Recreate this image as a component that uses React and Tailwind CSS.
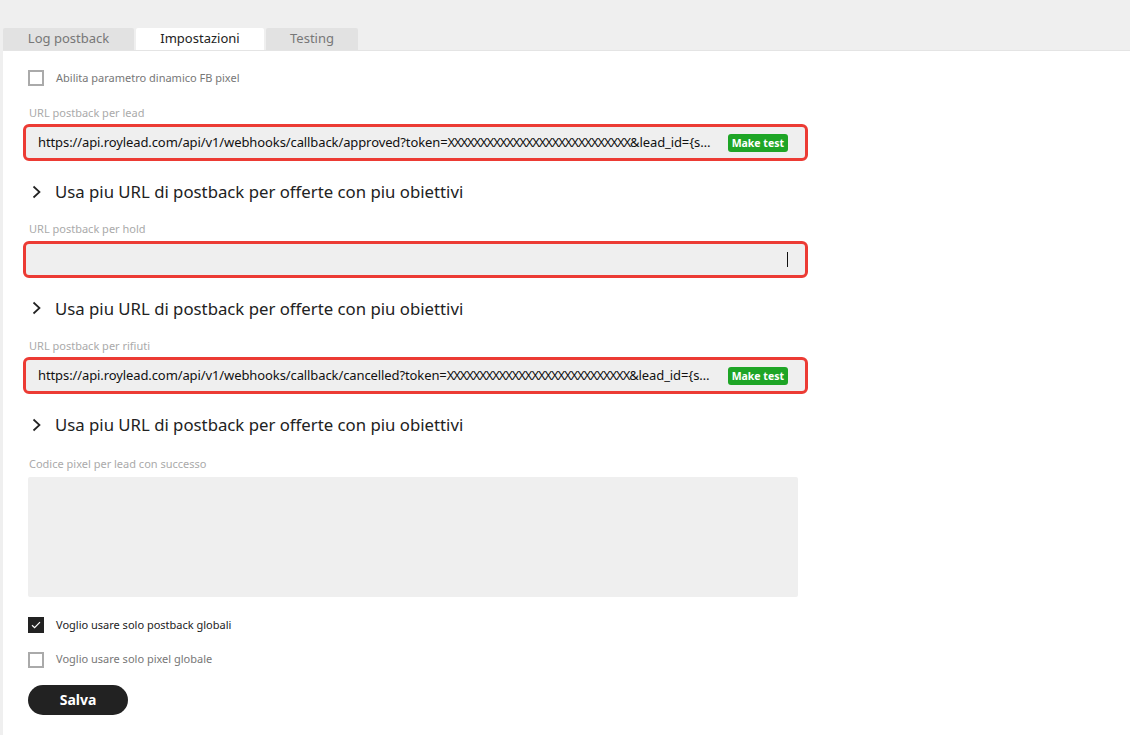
import React, { useState } from "react";

const tabs = ["Log postback", "Impostazioni", "Testing"];

const token = "XXXXXXXXXXXXXXXXXXXXXXXXXXXX";

const fields = [
  {
    label: "URL postback per lead",
    base: "https://api.roylead.com/api/v1/webhooks/callback/approved?token=",
    rest: "&lead_id={sub1}&status=approved",
  },
  { label: "URL postback per hold" },
  {
    label: "URL postback per rifiuti",
    base: "https://api.roylead.com/api/v1/webhooks/callback/cancelled?token=",
    rest: "&lead_id={sub1}&status=cancelled",
  },
];

function Checkbox({ checked, label }) {
  return (
    <label className="flex items-center gap-3 text-[11px]">
      <span
        className={`flex h-4 w-4 items-center justify-center ${
          checked ? "bg-[#222]" : "border-2 border-[#aaa] bg-white"
        }`}
      >
        {checked && (
          <svg width="10" height="8" viewBox="0 0 10 8" fill="none">
            <path d="M1 4.2 3.6 6.6 9 1.2" stroke="white" strokeWidth="1.2" />
          </svg>
        )}
      </span>
      <span className={checked ? "text-[#222]" : "text-[#777]"}>{label}</span>
    </label>
  );
}

function Chevron() {
  return (
    <svg width="10" height="14" viewBox="0 0 10 14" fill="none">
      <path d="M2.5 1.5 8.5 7 2.5 12.5" stroke="#222" strokeWidth="1.7" />
    </svg>
  );
}

function UrlField({ label, base, rest }) {
  return (
    <div className="flex flex-col">
      <div className="mb-[3px] pl-[6px] text-[11px] text-[#aaa]">{label}</div>
      <div className="flex h-[37px] w-[785px] items-center rounded-[6px] border-[3px] border-[#ec3b34] bg-[#efefef] pl-[12px] pr-[17px]">
        <span className="flex-1 truncate text-[13px] tracking-[-0.1px] text-[#111]">
          {base}
          {base && <span className="tracking-[-1.1px]">{token}</span>}
          {rest}
        </span>
        {base ? (
          <button className="ml-[13px] h-[18px] rounded-[3px] bg-[#1ea526] px-[4px] text-[10.5px] font-bold leading-[18px] text-white">
            Make test
          </button>
        ) : (
          <span className="ml-auto h-[15px] w-px bg-[#111]" />
        )}
      </div>
      <div className="mt-[18px] mb-[17px] flex items-center gap-[14px] pl-[8px] text-[16.75px] text-[#222]">
        <Chevron />
        <span>Usa piu URL di postback per offerte con piu obiettivi</span>
      </div>
    </div>
  );
}

export default function App() {
  const [active] = useState(1);

  return (
    <div
      className="min-h-[735px] w-[1130px] bg-[#efefef] pt-[28px]"
      style={{ fontFamily: "'Noto Sans', 'Open Sans', sans-serif" }}
    >
      <div className="flex gap-[2px] pl-[3px] text-[13px]">
        {tabs.map((tab, i) => (
          <div
            key={tab}
            className={`flex h-[22px] items-center justify-center rounded-t-[2px] ${
              i === active
                ? "w-[128px] bg-white text-[#222]"
                : "bg-[#e2e2e2] text-[#777] " + (i === 0 ? "w-[131px]" : "w-[92px]")
            }`}
          >
            {tab}
          </div>
        ))}
      </div>

      <div className="ml-[3px] min-h-[685px] border-t border-[#e4e4e4] bg-white pl-[20px] pt-[19px]">
        <div className="pl-[5px]">
          <Checkbox label="Abilita parametro dinamico FB pixel" />
        </div>

        <div className="mt-[18px]">
          {fields.map((f) => (
            <UrlField key={f.label} {...f} />
          ))}
        </div>

        <div className="mt-[2px] pl-[5px]">
          <div className="mb-[4px] pl-[1px] text-[11px] text-[#aaa]">Codice pixel per lead con successo</div>
          <div className="h-[120px] w-[770px] rounded-[2px] bg-[#efefef]" />

          <div className="mt-[20px] flex flex-col gap-[18px]">
            <Checkbox checked label="Voglio usare solo postback globali" />
            <Checkbox label="Voglio usare solo pixel globale" />
          </div>

          <button className="mt-[17px] h-[30px] w-[100px] rounded-full bg-[#222] text-[14px] font-bold text-white">
            Salva
          </button>
        </div>
      </div>
    </div>
  );
}
